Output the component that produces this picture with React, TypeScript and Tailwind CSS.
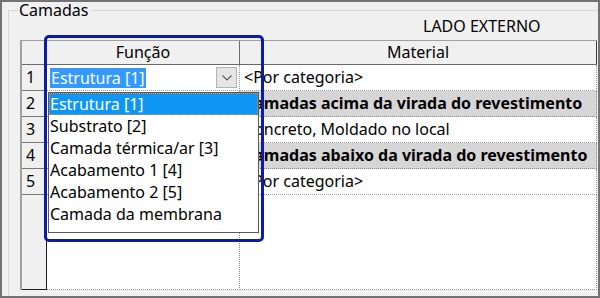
const items = [
  "Estrutura [1]",
  "Substrato [2]",
  "Camada térmica/ar [3]",
  "Acabamento 1 [4]",
  "Acabamento 2 [5]",
  "Camada da membrana",
];

const rows = [
  { n: 1, material: "<Por categoria>", group: false },
  { n: 2, material: "Camadas acima da virada do revestimento", group: true },
  { n: 3, material: "Concreto, Moldado no local", group: false },
  { n: 4, material: "Camadas abaixo da virada do revestimento", group: true },
  { n: 5, material: "<Por categoria>", group: false },
];

const App = () => {
  return (
    <div className="relative w-[600px] h-[298px] overflow-hidden bg-[#f0f0f0] border-2 border-[#737373] font-['Noto_Sans',sans-serif] text-[16px] text-black">
      {/* group box */}
      <div className="ml-[6px] mt-[-1px] flex flex-col">
        <div className="h-[18px] flex items-center">
          <div className="w-[9px] h-[9px] shrink-0 self-end border-t border-l border-[#d7d7d7]" />
          <span className="px-[2px] leading-[18px]">Camadas</span>
          <div className="flex-1 h-[9px] self-end border-t border-[#d7d7d7]" />
        </div>

        <div className="h-[300px] border-l border-[#d7d7d7]">
          <div className="h-[21px] pl-[414px] leading-[14px]">LADO EXTERNO</div>

          {/* grid */}
          <div className="ml-[11px] w-[577px] h-[250px] flex flex-col border-t border-l-2 border-[#a0a0a0] bg-white">
            <div className="h-[24px] flex border-b border-[#6a6a6a] bg-[#f0f0f0] leading-[23px]">
              <div className="w-[25px] border-r border-[#8a8a8a]" />
              <div className="w-[193px] border-r border-[#6a6a6a] text-center">Função</div>
              <div className="w-[357px] border-r border-[#3a3a3a] text-center">Material</div>
            </div>

            {rows.map((row) => (
              <div key={row.n} className="h-[26px] flex">
                <div className="w-[25px] pl-[4px] leading-[25px] bg-[#f0f0f0] border-r border-b border-[#7a7a7a]">
                  {row.n}
                </div>
                <div className="w-[193px] flex items-center border-r border-b border-dotted border-[#9a9a9a]">
                  {row.n === 1 && (
                    <>
                      <span className="ml-[3px] px-[1px] h-[20px] leading-[20px] bg-[#3399ff] text-white">
                        Estrutura [1]
                      </span>
                      <div className="ml-auto mr-[2px] w-[21px] h-[21px] flex items-center justify-center bg-[#e5e5e5] border border-[#b4b4b4]">
                        <svg width="10" height="6" viewBox="0 0 10 6">
                          <polyline points="0.5,0.5 5,5 9.5,0.5" fill="none" stroke="#5a5a5a" strokeWidth="1.1" />
                        </svg>
                      </div>
                    </>
                  )}
                </div>
                <div
                  className={
                    row.group
                      ? "w-[357px] pl-[4px] leading-[25px] whitespace-nowrap font-bold bg-[#d6d6d6] border-r border-b border-dotted border-[#8a8a8a]"
                      : "w-[357px] pl-[4px] leading-[25px] whitespace-nowrap border-r border-b border-dotted border-[#9a9a9a]"
                  }
                >
                  {row.material}
                </div>
              </div>
            ))}

            <div className="flex-1 flex">
              <div className="w-[25px] bg-[#f0f0f0] border-r border-b border-[#1e1e1e]" />
              <div className="w-[193px] border-r border-b border-dotted border-[#8a8a8a]" />
              <div className="w-[357px] border-r border-b border-dotted border-[#8a8a8a]" />
            </div>
          </div>
        </div>
      </div>

      {/* open dropdown list */}
      <div className="absolute left-[46px] top-[90px] w-[211px] h-[141px] bg-white border border-[#5a5a5a] flex flex-col">
        {items.map((item, i) => (
          <div
            key={item}
            className={
              i === 0
                ? "h-[22px] leading-[20px] bg-[#0f96f5] text-white border border-dotted border-[#e08a2a]"
                : "h-[22px] leading-[22px] pl-[1px] whitespace-nowrap"
            }
          >
            {item}
          </div>
        ))}
      </div>

      {/* annotation frame */}
      <div className="absolute left-[42px] top-[33px] w-[220px] h-[207px] border-[3px] border-[#0c1da3] rounded-[5px]" />
    </div>
  );
};

export default App;
